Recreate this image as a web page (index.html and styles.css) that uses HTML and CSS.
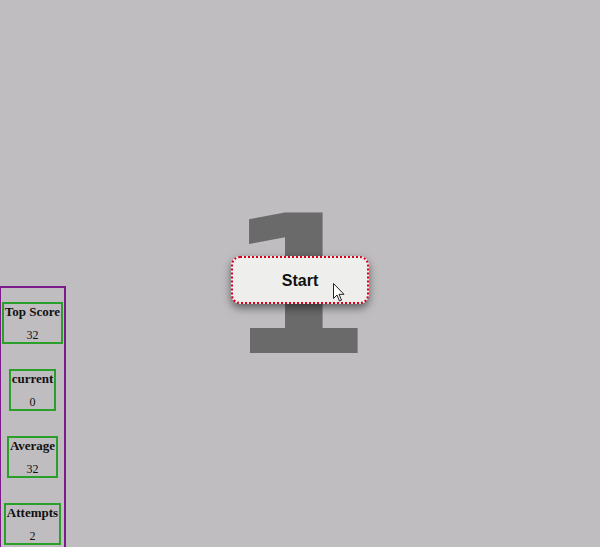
FILE: index.html
```html
<!DOCTYPE html>
<html lang="en">
<head>
<meta charset="utf-8">
<title>Reaction</title>
<link rel="stylesheet" href="styles.css">
</head>
<body>
<main class="stage">
  <div class="center">
    <span class="digit">1</span>
    <button class="start" type="button">Start
      <svg class="cursor" width="12" height="19" viewBox="0 0 12 19" aria-hidden="true">
        <path d="M0.5 0.5 L0.5 15.5 L4 12 L6.5 18 L8.5 17.2 L6 11.3 L11 11.3 Z" fill="#fff" stroke="#222" stroke-width="1" stroke-linejoin="round"/>
      </svg>
    </button>
  </div>
  <aside class="stats">
    <div class="stat"><h4>Top Score</h4><p>32</p></div>
    <div class="stat"><h4>current</h4><p>0</p></div>
    <div class="stat"><h4>Average</h4><p>32</p></div>
    <div class="stat"><h4>Attempts</h4><p>2</p></div>
  </aside>
</main>
</body>
</html>
```
FILE: styles.css
```css
html, body {
  margin: 0;
  padding: 0;
}
body {
  background: #bfbdc0;
  font-family: "Liberation Serif", serif;
}
.stage {
  position: relative;
  width: 100vw;
  height: 100vh;
  overflow: hidden;
  display: grid;
  place-items: center;
}
.center {
  display: grid;
  place-items: center;
  margin-top: 11px;
}
.center > * {
  grid-area: 1 / 1;
}
.digit {
  font-family: "DejaVu Sans", sans-serif;
  font-weight: 700;
  font-size: 192px;
  line-height: 1;
  color: #6b6a6a;
  transform: translate(-1px, 8px) scaleX(1.1);
}
.start {
  position: relative;
  width: 138px;
  height: 48px;
  box-sizing: border-box;
  border: 2px dotted #d6001c;
  border-radius: 9px;
  background: #eeefed;
  box-shadow: 0 4px 8px rgba(0, 0, 0, 0.5);
  font-family: "Liberation Sans", Arial, sans-serif;
  font-weight: 700;
  font-size: 16px;
  color: #111;
  padding: 1px 0 0;
  margin-top: 2px;
}
.cursor {
  position: absolute;
  left: 100px;
  top: 25px;
}
.stats {
  position: absolute;
  left: -1px;
  top: 286px;
  width: 63px;
  height: 300px;
  border: 2px solid #7b1a88;
  padding-top: 14px;
  display: flex;
  flex-direction: column;
  align-items: center;
  gap: 25px;
}
.stat {
  border: 2px solid #2a9f2a;
  padding: 0 1px;
  text-align: center;
  color: #111;
}
.stat h4 {
  margin: 0;
  font-size: 13px;
  font-weight: 700;
  line-height: 15px;
}
.stat p {
  margin: 10px 0 0;
  font-size: 12px;
  line-height: 13px;
}
```
